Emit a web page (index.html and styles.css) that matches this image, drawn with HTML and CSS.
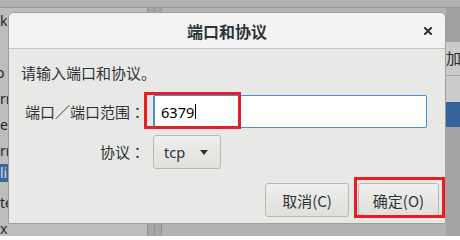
FILE: index.html
```html
<!DOCTYPE html>
<html lang="zh-CN">
<head>
<meta charset="utf-8">
<title>端口和协议</title>
<link rel="stylesheet" href="styles.css">
</head>
<body>
<div class="screen">
  <div class="topbar"></div>
  <div class="main">
    <div class="sidebar">
      <div class="row">k</div>
      <div class="row"></div>
      <div class="row shift">o</div>
      <div class="row">rn</div>
      <div class="row">e</div>
      <div class="row">rn</div>
      <div class="row selected">li</div>
      <div class="row">te</div>
      <div class="row">x</div>
    </div>
    <div class="gutter"></div>
    <div class="content"></div>
    <div class="rightpanel">
      <div class="rp-top"></div>
      <div class="rp-panel">
        <div class="rp-btn">加</div>
      </div>
      <div class="rp-sel"></div>
    </div>
  </div>

  <div class="dialog">
    <div class="dlg-header">
      <span></span>
      <span class="dlg-title">端口和协议</span>
      <svg class="dlg-close" width="8" height="8" viewBox="0 0 8 8"><path d="M1 1 L7 7 M7 1 L1 7" stroke="#2e3436" stroke-width="2" stroke-linecap="square"/></svg>
    </div>
    <div class="dlg-body">
      <div class="intro">请输入端口和协议。</div>
      <div class="form">
        <div class="label" lang="ja">端口／端口范围：</div>
        <div class="entry"><span class="entry-text">6379</span><span class="caret"></span></div>
        <div class="label" lang="ja">协议：</div>
        <div class="combo-wrap">
          <div class="combo"><span>tcp</span><span class="arrow"></span></div>
        </div>
      </div>
      <div class="actions">
        <div class="btn btn-cancel">取消(C)</div>
        <div class="btn btn-ok">确定(O)</div>
      </div>
    </div>
  </div>

  <div class="mark mark-port"></div>
  <div class="mark mark-ok"></div>
</div>
</body>
</html>
```
FILE: styles.css
```css
* { box-sizing: border-box; }
html, body { margin: 0; padding: 0; }
body {
  width: 460px;
  height: 236px;
  overflow: hidden;
  font-family: "Noto Sans", "Noto Sans CJK JP", sans-serif;
  color: #2e3436;
}
.screen {
  position: relative;
  width: 460px;
  height: 236px;
  background: #a6a6a6;
  overflow: hidden;
  display: flex;
  flex-direction: column;
}
.topbar {
  height: 8px;
  background: #b1b1b1;
  border-bottom: 1px solid #959595;
  flex: none;
}
.main {
  flex: 1;
  display: flex;
}
.sidebar {
  width: 148px;
  background: #bdbdbd;
  border-right: 1px solid #8f8f8f;
  font-size: 14px;
  color: #262626;
  overflow: hidden;
  white-space: nowrap;
}
.row {
  height: 26px;
  line-height: 26px;
}
.row.shift { text-indent: -4px; }
.row.selected {
  height: 18px;
  line-height: 18px;
  margin-bottom: 8px;
  background: #3b679b;
  color: #d8dde4;
}
.gutter {
  width: 7px;
  border-right: 1px solid #939393;
}
.content {
  flex: 1;
  margin-left: 6px;
  border-left: 1px solid #939393;
  background: #b3b3b3;
}
.rightpanel {
  width: 14px;
  display: flex;
  flex-direction: column;
  background: #a4a4a4;
}
.rp-top {
  height: 34px;
  background: #a0a0a0;
}
.rp-panel {
  height: 60px;
  background: #cbcbcb;
}
.rp-btn {
  height: 34px;
  border-bottom: 1px solid #a3a3a3;
  padding-top: 6px;
  font-family: "Noto Sans CJK JP", sans-serif;
  font-size: 15px;
  line-height: 20px;
  color: #2a2a2a;
  white-space: nowrap;
  overflow: hidden;
}
.rp-sel {
  height: 25px;
  background: #35639a;
}

/* dialog */
.dialog {
  position: absolute;
  left: 8px;
  top: 12px;
  width: 438px;
  height: 212px;
  border: 1px solid #9e9e9c;
  border-radius: 6px 6px 0 0;
  background: #e8e8e7;
  display: flex;
  flex-direction: column;
  overflow: hidden;
}
.dlg-header {
  height: 36px;
  flex: none;
  background: #f3f3f3;
  border-bottom: 1px solid #c4c4c1;
  display: grid;
  grid-template-columns: 1fr auto 1fr;
  align-items: center;
}
.dlg-title {
  font-family: "Noto Sans CJK JP", sans-serif;
  font-weight: bold;
  font-size: 16px;
  color: #2e3436;
  line-height: 20px;
  padding-top: 1px;
}
.dlg-close {
  justify-self: end;
  margin-right: 13px;
  margin-top: 1px;
}
.dlg-body {
  flex: 1;
  display: flex;
  flex-direction: column;
  padding: 14px 6px 6px 12px;
  font-family: "Noto Sans CJK JP", sans-serif;
  font-size: 15px;
}
.intro {
  line-height: 20px;
  color: #2e3436;
}
.form {
  margin-top: 12px;
  display: grid;
  grid-template-columns: 124px 274px;
  grid-template-rows: 33px 34px;
  column-gap: 8px;
  row-gap: 7px;
  align-items: center;
}
.label {
  text-align: right;
  line-height: 20px;
  color: #2e3436;
  white-space: nowrap;
}
.entry {
  height: 33px;
  background: #ffffff;
  border: 1px solid #4a90d9;
  border-left-width: 2px;
  border-radius: 2px;
  display: flex;
  align-items: center;
  padding-left: 6px;
  font-family: "Noto Sans", "Noto Sans CJK JP", sans-serif;
  font-size: 14.6px;
  color: #000;
}
.caret {
  width: 1px;
  height: 15px;
  background: #000;
  margin-left: 1px;
}
.combo-wrap { display: flex; height: 34px; }
.combo {
  width: 68px;
  height: 34px;
  border: 1px solid #b8b8b5;
  border-radius: 3px;
  background: linear-gradient(#eeeeec, #e0e0dd);
  display: flex;
  align-items: center;
  padding-left: 10px;
  gap: 15px;
  font-family: "Noto Sans", "Noto Sans CJK JP", sans-serif;
  font-size: 14.6px;
  color: #2e3436;
}
.arrow {
  width: 0;
  height: 0;
  border-left: 4.5px solid transparent;
  border-right: 4.5px solid transparent;
  border-top: 5px solid #2e3436;
  margin-top: 1px;
}
.actions {
  margin-top: auto;
  display: flex;
  justify-content: flex-end;
  gap: 9px;
}
.btn {
  height: 34px;
  border: 1px solid #b8b8b5;
  border-radius: 3px;
  background: linear-gradient(#efefed, #dfdfdc);
  display: flex;
  align-items: center;
  justify-content: center;
  font-size: 15px;
  color: #2e3436;
  padding-top: 1px;
}
.btn-cancel { width: 84px; }
.btn-ok { width: 81px; }

/* red annotation boxes */
.mark {
  position: absolute;
  border: 3px solid #ec1c24;
}
.mark-port { left: 144px; top: 92px; width: 97px; height: 37px; }
.mark-ok { left: 354px; top: 177px; width: 91px; height: 41px; }
```
